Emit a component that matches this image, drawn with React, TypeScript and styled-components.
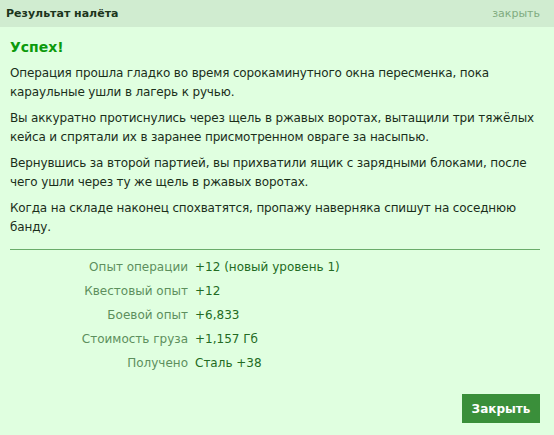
import React from "react";
import styled, { createGlobalStyle } from "styled-components";

const GlobalStyle = createGlobalStyle`
  html, body {
    margin: 0;
    padding: 0;
    background: #e0ffe0;
  }
  body {
    font-family: "DejaVu Sans", Verdana, sans-serif;
    font-size: 12px;
  }
`;

const Dialog = styled.div`
  width: 554px;
  height: 435px;
  background: #e0ffe0;
  display: flex;
  flex-direction: column;
  overflow: hidden;
`;

const Header = styled.div`
  height: 27px;
  background: #d0ecd0;
  display: flex;
  align-items: center;
  justify-content: space-between;
  padding: 0 14px 0 6px;
`;

const HeaderTitle = styled.div`
  font-weight: bold;
  font-size: 11px;
  color: #1c351c;
`;

const CloseLink = styled.a`
  color: #7fab7f;
  font-size: 11px;
  cursor: pointer;
`;

const Body = styled.div`
  flex: 1;
  display: flex;
  flex-direction: column;
  padding: 12px 14px 12px 10px;
`;

const Title = styled.h2`
  margin: 0 0 9px 0;
  font-size: 14px;
  font-weight: bold;
  color: #0c9a0c;
`;

const Paragraph = styled.p`
  margin: 0 0 7px 0;
  line-height: 19px;
  letter-spacing: -0.15px;
  color: #1a2e1a;
`;

const Divider = styled.hr`
  border: none;
  border-top: 1px solid #6aac6a;
  margin: 5px 0 5px 0;
`;

const Stats = styled.div`
  display: grid;
  grid-template-columns: 178px auto;
  column-gap: 7px;
  grid-auto-rows: 24px;
  align-items: center;
`;

const StatLabel = styled.div`
  text-align: right;
  color: #5d8f5d;
`;

const StatValue = styled.div`
  color: #236b23;
`;

const Footer = styled.div`
  margin-top: auto;
  display: flex;
  justify-content: flex-end;
`;

const Button = styled.button`
  width: 78px;
  height: 29px;
  border: none;
  background: #3a8f3a;
  color: #ffffff;
  font-family: inherit;
  font-size: 12px;
  font-weight: bold;
  cursor: pointer;
`;

const paragraphs = [
  "Операция прошла гладко во время сорокаминутного окна пересменка, пока караульные ушли в лагерь к ручью.",
  "Вы аккуратно протиснулись через щель в ржавых воротах, вытащили три тяжёлых кейса и спрятали их в заранее присмотренном овраге за насыпью.",
  "Вернувшись за второй партией, вы прихватили ящик с зарядными блоками, после чего ушли через ту же щель в ржавых воротах.",
  "Когда на складе наконец спохватятся, пропажу наверняка спишут на соседнюю банду.",
];

const stats = [
  { label: "Опыт операции", value: "+12 (новый уровень 1)" },
  { label: "Квестовый опыт", value: "+12" },
  { label: "Боевой опыт", value: "+6,833" },
  { label: "Стоимость груза", value: "+1,157 Гб" },
  { label: "Получено", value: "Сталь +38" },
];

export default function App() {
  return (
    <>
      <GlobalStyle />
      <Dialog>
        <Header>
          <HeaderTitle>Результат налёта</HeaderTitle>
          <CloseLink>закрыть</CloseLink>
        </Header>
        <Body>
          <Title>Успех!</Title>
          {paragraphs.map((text, i) => (
            <Paragraph key={i}>{text}</Paragraph>
          ))}
          <Divider />
          <Stats>
            {stats.map((s) => (
              <React.Fragment key={s.label}>
                <StatLabel>{s.label}</StatLabel>
                <StatValue>{s.value}</StatValue>
              </React.Fragment>
            ))}
          </Stats>
          <Footer>
            <Button>Закрыть</Button>
          </Footer>
        </Body>
      </Dialog>
    </>
  );
}
